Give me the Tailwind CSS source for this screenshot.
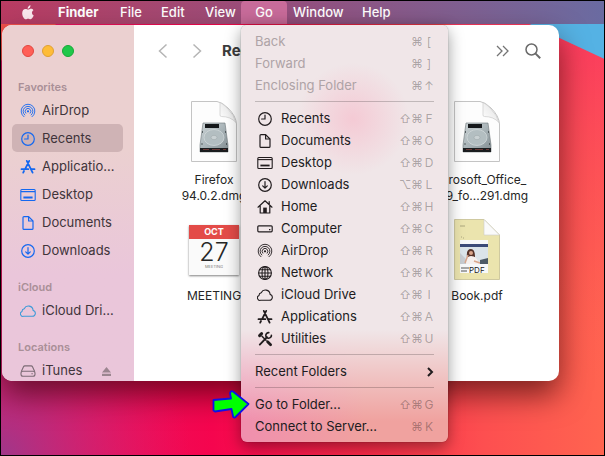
<!DOCTYPE html>
<html lang="en">
<head>
  <meta charset="UTF-8" />
  <meta name="viewport" content="width=device-width, initial-scale=1" />
  <title>Finder</title>
  <script src="https://cdn.jsdelivr.net/npm/@tailwindcss/browser@4"></script>
</head>
<body class="font-['Inter',sans-serif] text-[13px] text-[#2b2327]">

  <!-- Icon set -->
  <svg class="absolute size-0">
    <symbol id="clock" viewBox="0 0 16 16"><g fill="none" stroke="currentColor" stroke-width="1.2" stroke-linecap="round"><circle cx="8" cy="8" r="6.3"/><path d="M8 4v4H4.6"/></g></symbol>
    <symbol id="doc" viewBox="0 0 16 16"><g fill="none" stroke="currentColor" stroke-width="1.2" stroke-linejoin="round"><path d="M3 2.5Q3 1.6 4 1.6h4.6L13 6v7.4q0 1-1 1H4q-1 0-1-1z"/><path d="M8.6 1.8V6H13"/></g></symbol>
    <symbol id="desktop" viewBox="0 0 16 16"><g fill="none" stroke="currentColor" stroke-width="1.1"><rect x=".8" y="2.5" width="14.4" height="11" rx="1"/><path d="M1 4.6h14"/></g><path fill="currentColor" d="M3.4 9.6h9.2v1.8H3.4z"/></symbol>
    <symbol id="download" viewBox="0 0 16 16"><g fill="none" stroke="currentColor" stroke-width="1.2" stroke-linecap="round" stroke-linejoin="round"><circle cx="8" cy="8" r="6.3"/><path d="M8 4.6v6.4M5.7 8.9L8 11.2l2.3-2.3"/></g></symbol>
    <symbol id="home" viewBox="0 0 16 16"><path fill="none" stroke="currentColor" stroke-width="1.2" stroke-linejoin="round" stroke-linecap="round" d="M1 8.2L8 1.8l7 6.400M3.200 7v7h9.600V7M12.200 5V2.600"/><path fill="currentColor" d="M6.200 8.600h3.600V14H6.200z"/></symbol>
    <symbol id="computer" viewBox="0 0 16 16"><rect x=".8" y="4.8" width="14.4" height="6" rx="1" fill="none" stroke="currentColor" stroke-width="1.2"/><path fill="currentColor" d="M12 8h1.4v1.2H12z"/></symbol>
    <symbol id="airdrop" viewBox="0 0 16 16"><g fill="none" stroke="currentColor" stroke-width=".9" stroke-linecap="round"><path d="M4 13.800a6.900 6.900 0 1 1 8 0"/><path d="M4.800 12a4.900 4.900 0 1 1 6.400 0"/><path d="M5.800 10.200a2.900 2.900 0 1 1 4.400 0"/></g><circle cx="8" cy="8.300" r="1.100" fill="currentColor"/></symbol>
    <symbol id="network" viewBox="0 0 16 16"><g fill="none" stroke="currentColor" stroke-width="1.1"><circle cx="8" cy="8" r="6.4"/><ellipse cx="8" cy="8" rx="3" ry="6.4"/><path d="M8 1.6v12.8M1.6 8h12.8M2.6 4.8h10.8M2.6 11.2h10.8"/></g></symbol>
    <symbol id="cloud" viewBox="0 0 16 16"><path fill="none" stroke="currentColor" stroke-width="1.1" stroke-linejoin="round" d="M3.700 13.300h8.600a3 3 0 0 0 .8-5.900A4.700 4.700 0 0 0 4.200 5.700 2.800 2.800 0 0 0 2 8.400a2.600 2.600 0 0 0 1.700 4.900z"/></symbol>
    <symbol id="apps" viewBox="0 0 16 16"><path fill="none" stroke="currentColor" stroke-width="1.8" stroke-linecap="round" d="M6.8 1.9l5.8 11.7M9.2 1.9L5.2 9.8M4 12l-.8 1.6M1.5 10.2h6.8M11.6 10.2h2.9"/></symbol>
    <symbol id="tools" viewBox="0 0 16 16"><g fill="none" stroke="currentColor" stroke-linecap="round"><path stroke-width="1.900" d="M2.800 13.600l7.200-7.400"/><path stroke-width="1.600" d="M14.400 4.200a2.800 2.800 0 1 1-2.600-2.600"/><path stroke-width="2.800" d="M10.600 10.800l3 3"/><path stroke-width="1.500" d="M5 5.200l4 4"/><path stroke-width="3" d="M2.600 4.600l2-2"/></g></symbol>
    <symbol id="drive" viewBox="0 0 16 16"><g fill="none" stroke="currentColor" stroke-width="1.1" stroke-linejoin="round"><path d="M1.2 8.8l2.3-5q.4-.9 1.4-.9h6.2q1 0 1.4.9l2.3 5"/><rect x="1" y="8.2" width="14" height="5" rx="2"/><path d="M11.4 10.7h1.4"/></g></symbol>

    <linearGradient id="metal" x1="0" y1="0" x2="1" y2="1"><stop offset="0" stop-color="#ccd4d6"/><stop offset=".5" stop-color="#a9b4b8"/><stop offset="1" stop-color="#828d91"/></linearGradient>
    <linearGradient id="fold" x1="0" y1="1" x2="1" y2="0"><stop offset="0" stop-color="#fff"/><stop offset=".6" stop-color="#ececec"/><stop offset="1" stop-color="#cfcfcf"/></linearGradient>
    <symbol id="dmg" viewBox="0 0 46 61">
      <path d="M.5.5H26Q31 1 37 7q8 8 8.500 16v37.500H.5z" fill="#fdfdfd" stroke="#c4c4c4"/>
      <path d="M29 1.500V14q0 1.500 1.500 1.500 9 0 14.500 6Q43 14 37 8 33 3.500 29 1.500z" fill="url(#fold)" stroke="#cacaca" stroke-width=".7"/>
      <path d="M12 22h22l3 22v7H9v-7z" fill="url(#metal)" stroke="#6d7679" stroke-width=".6"/>
      <path d="M9 47h28v4H9z" fill="#1b1d1f"/>
      <path d="M12 48.500h6M21 48.500h8M32 48.500h3" stroke="#6b3a37" stroke-width="1"/>
      <path d="M14 23h14v4H14z" fill="#15181b"/>
      <ellipse cx="23" cy="36.500" rx="10" ry="8" fill="#b3bec1" stroke="#d4dbdd" stroke-width=".7"/>
      <ellipse cx="23" cy="36.500" rx="3" ry="2.200" fill="#c9d1d3" stroke="#98a2a5" stroke-width=".5"/>
      <path d="M11 31h1M34 31h1M10.500 43h1M35 43h1" stroke="#3b4346" stroke-width="1.500"/>
    </symbol>
  </svg>

  <div class="relative h-screen overflow-hidden border border-black">

    <!-- Wallpaper -->
    <svg class="absolute inset-0 size-full" viewBox="0 0 605 456" preserveAspectRatio="none">
      <defs>
        <linearGradient id="base"><stop offset="0" stop-color="#e01a68"/><stop offset=".35" stop-color="#f5054e"/><stop offset=".6" stop-color="#fa2a48"/><stop offset=".8" stop-color="#fd4f50"/><stop offset="1" stop-color="#ff6450"/></linearGradient>
        <radialGradient id="violet" gradientUnits="userSpaceOnUse" cx="0" cy="456" r="190"><stop offset="0" stop-color="#a0378a"/><stop offset="1" stop-color="#e0206e" stop-opacity="0"/></radialGradient>
        <linearGradient id="rose" x2="0" y2="1"><stop offset="0" stop-color="#fa3560"/><stop offset=".6" stop-color="#fc4a58" stop-opacity=".4"/><stop offset="1" stop-color="#ff6450" stop-opacity="0"/></linearGradient>
      </defs>
      <rect width="605" height="456" fill="url(#base)"/>
      <rect x="450" width="155" height="400" fill="url(#rose)"/>
      <rect width="300" height="456" fill="url(#violet)"/>
      <path d="M0 20h60L0 60z" fill="#f2514c"/>
      <path d="M528 22h77v36z" fill="#55b2e4"/>
    </svg>

    <!-- Menu bar -->
    <nav class="relative flex h-[23px] items-center bg-linear-to-r from-[#b93b62] via-[#93507f] to-[#6a6ba1] pl-5 font-medium text-white">
      <svg class="mr-[23px] h-[15px] w-[14px] fill-[#fbe9ef]" viewBox="0 0 14 16"><path d="M9.700.300c.1 1-.3 1.900-.9 2.600-.6.700-1.400 1.100-2.200 1.100-.1-1 .3-1.800.9-2.500C8.100.8 9 .3 9.700.3zM12.800 5.500c-1.100.7-1.600 1.600-1.600 2.700 0 1.300.7 2.300 1.900 2.800-.5 1.500-1.800 4.200-3.400 4.200-1 0-1.300-.6-2.500-.6s-1.600.6-2.500.6C2.800 15.200.8 11.700.8 8.700c0-2.900 1.700-4.500 3.500-4.500 1.200 0 2 .7 2.800.7.800 0 1.800-.8 3.200-.8 1 0 1.900.5 2.500 1.400z"/></svg>
      <button class="w-[62px] text-left font-bold">Finder</button>
      <button class="w-[41px] text-left">File</button>
      <button class="w-11 text-left">Edit</button>
      <button class="w-9 text-left">View</button>
      <button class="h-full w-[46px] rounded-t-sm bg-[#c96c9b]">Go</button>
      <button class="w-[75px] pl-1.5 text-left">Window</button>
      <button class="text-left">Help</button>
    </nav>

    <!-- Finder window -->
    <main class="absolute top-6 left-px flex h-[356px] w-[557px] overflow-hidden rounded-[10px] bg-white shadow-[0_14px_30px_rgba(40,0,0,0.6)]">
      <aside class="w-[132px] shrink-0 bg-linear-to-b from-[#ebd0d0] from-35% to-[#eac6da] to-70% pl-2.5 text-[#40343a]">
        <div class="flex h-[39px] gap-2 pt-5 pl-2.5">
          <button aria-label="Close" class="size-3 rounded-full border border-[#e2463f] bg-[#ff5f57]"></button>
          <button aria-label="Minimize" class="size-3 rounded-full border border-[#e0a033] bg-[#febc38]"></button>
          <button aria-label="Zoom" class="size-3 rounded-full border border-[#17a837] bg-[#1fc84a]"></button>
        </div>
        <div id="sidebar"></div>
      </aside>

      <section class="min-w-0 grow">
        <div class="flex h-[52px] items-center pr-[18px] pl-6 text-[#6f6f6f]">
          <button aria-label="Back" class="mr-6"><svg class="h-4 w-2.5 fill-none stroke-[#b5b5b5] stroke-[1.5]" viewBox="0 0 10 16"><path d="M8.500 1.500L1.500 8l7 6.500"/></svg></button>
          <button aria-label="Forward" class="mr-5"><svg class="h-4 w-2.5 fill-none stroke-[#b5b5b5] stroke-[1.5]" viewBox="0 0 10 16"><path d="M1.500 1.500l7 6.500-7 6.500"/></svg></button>
          <h1 class="grow text-[15px] font-bold text-[#3c3c3c]">Recents</h1>
          <button aria-label="More" class="mr-4"><svg class="h-3 w-[13px] fill-none stroke-[#747474] stroke-[1.3]" viewBox="0 0 13 12"><path d="M1 1l5 5-5 5M7 1l5 5-5 5"/></svg></button>
          <button aria-label="Search"><svg class="size-4 fill-none stroke-[#6a6a6a] stroke-[1.5]" viewBox="0 0 16 16"><circle cx="6.500" cy="6.500" r="5.500"/><path stroke-width="2" d="M10.600 10.600l4.600 4.600"/></svg></button>
        </div>

        <div class="grid grid-cols-[112px_112px] justify-between gap-y-[15px] pr-[26px] pl-6 pt-6 text-center text-[12px] leading-4 text-[#262626]">
          <figure>
            <svg class="mx-auto h-[61px] w-[46px]"><use href="#dmg"/></svg>
            <figcaption class="mt-2.5">Firefox<br>94.0.2.dmg</figcaption>
          </figure>
          <figure>
            <svg class="mx-auto h-[61px] w-[46px]"><use href="#dmg"/></svg>
            <figcaption class="mt-2.5">Microsoft_Office_<br>2019_fo...291.dmg</figcaption>
          </figure>
          <figure>
            <div class="flex h-[61px] items-center justify-center">
              <div class="h-[50px] w-[50px] bg-[#fafafa] shadow-[0_1px_2px_rgba(0,0,0,0.5)]">
                <p class="h-3.5 bg-[#e34b48] text-[9px] leading-3.5 font-bold text-white">OCT</p>
                <p class="text-[25px] leading-[26px] font-light">27</p>
                <p class="text-[4px] leading-1 text-[#777]">MEETING</p>
              </div>
            </div>
            <figcaption class="mt-2">MEETING</figcaption>
          </figure>
          <figure>
            <svg class="mx-auto h-[61px] w-[46px]" viewBox="0 0 46 61">
              <path d="M.5.5H30L45.500 16v44.500H.5z" fill="#ebe4ae" stroke="#cfc9a0"/>
              <path d="M30 .5V16h15.500z" fill="#fafafa" stroke="#cfcfcf" stroke-width=".6"/>
              <path d="M6 7h5M7 18h1M9 19h1" stroke="#9c9872" stroke-width=".8"/>
              <path d="M6 21h28v33H6z" fill="#f7f8fa"/>
              <path d="M6 25h28v3H6z" fill="#3b4a78"/>
              <path d="M6 28h28v17H6z" fill="#dbe4ea"/>
              <path d="M6 45V34l5 5 3 6z" fill="#c7ccd2"/>
              <path d="M13 38q-1-8 4-8 4 0 4 8z" fill="#55332a"/>
              <path d="M12 45q0-8 5-8 6 0 8 8z" fill="#f6f0ee"/>
              <circle cx="17" cy="34" r="2" fill="#d9a58b"/>
              <path d="M11 44l3-8M20 42l6 2" stroke="#d9a58b" stroke-width="1.500"/>
              <path d="M26 41l8-2v6h-8z" fill="#4c5a66"/>
              <path d="M7 49h8M7 52h6" stroke="#555" stroke-width="1"/>
              <text x="15" y="54" class="text-[8px]" fill="#222">PDF</text>
            </svg>
            <figcaption class="mt-2">Book.pdf</figcaption>
          </figure>
        </div>
      </section>
    </main>

    <!-- Go menu -->
    <div id="go-menu" class="absolute top-6 left-60 w-[207px] rounded-md bg-[radial-gradient(circle_at_112px_94px,rgba(246,190,204,0.7),rgba(246,190,204,0)_56px),linear-gradient(to_bottom,#f0e6e8_73%,rgba(240,230,232,0)_95%),linear-gradient(to_right,#f08fae,#f0a29f_60%)] py-[5px] shadow-[0_5px_16px_rgba(0,0,0,0.4),0_0_1px_rgba(0,0,0,0.6)]"></div>

    <!-- Pointer arrow -->
    <svg class="absolute top-[388px] left-[210px] h-[30px] w-10" viewBox="0 0 40 30"><path d="M2.500 11l17.500-1.500L19 4q1-2.500 3-1.500L37.500 15 24 28.500q-2 .5-2-1.500l-1.500-7L4 22.500l-1.500-1z" fill="#0f0" stroke="#1010e8" stroke-width="1.800" stroke-linejoin="round"/></svg>
  </div>

  <script>
    const sections = [
      { title: 'Favorites', items: [['airdrop', 'AirDrop'], ['clock', 'Recents'], ['apps', 'Applicatio...'], ['desktop', 'Desktop'], ['doc', 'Documents'], ['download', 'Downloads']] },
      { title: 'iCloud', items: [['cloud', 'iCloud Dri...']] },
      { title: 'Locations', items: [['drive', 'iTunes']] }
    ];

    // [icon, label, shortcut keys, state]; null is a separator
    const menu = [
      ['', 'Back', ['', '⌘', '['], 'off'],
      ['', 'Forward', ['', '⌘', ']'], 'off'],
      ['', 'Enclosing Folder', ['', '⌘', '↑'], 'off'],
      null,
      ['clock', 'Recents', ['⇧', '⌘', 'F']],
      ['doc', 'Documents', ['⇧', '⌘', 'O']],
      ['desktop', 'Desktop', ['⇧', '⌘', 'D']],
      ['download', 'Downloads', ['⌥', '⌘', 'L']],
      ['home', 'Home', ['⇧', '⌘', 'H']],
      ['computer', 'Computer', ['⇧', '⌘', 'C']],
      ['airdrop', 'AirDrop', ['⇧', '⌘', 'R']],
      ['network', 'Network', ['⇧', '⌘', 'K']],
      ['cloud', 'iCloud Drive', ['⇧', '⌘', 'I']],
      ['apps', 'Applications', ['⇧', '⌘', 'A']],
      ['tools', 'Utilities', ['⇧', '⌘', 'U']],
      null,
      ['', 'Recent Folders', null],
      null,
      ['', 'Go to Folder...', ['⇧', '⌘', 'G']],
      ['', 'Connect to Server...', ['', '⌘', 'K']]
    ];

    const iconColor = { cloud: 'text-[#3d9ad8]', drive: 'text-[#7c6b75]' };

    document.getElementById('sidebar').innerHTML = sections.map(s => `
      <h2 class="h-8 pt-3.5 pl-1.5 text-[11px] leading-[18px] font-semibold text-[#a98f97]">${s.title}</h2>
      ${s.items.map(([icon, label]) => `
        <a href="#" class="flex h-7 w-[111px] items-center gap-1.5 rounded-[5px] pt-0.5 pl-2 ${label === 'Recents' ? 'bg-[#cfb3b5]' : ''}">
          <svg class="size-4 shrink-0 ${iconColor[icon] || 'text-[#1468f0]'}"><use href="#${icon}"/></svg>
          <span class="grow">${label}</span>
          ${icon === 'drive' ? '<svg class="mr-3 size-[9px] fill-[#9b8590]" viewBox="0 0 9 9"><path d="M4.500 0L9 5.500H0zM0 6.700h9V9H0z"/></svg>' : ''}
        </a>`).join('')}
    `).join('');

    document.getElementById('go-menu').innerHTML = menu.map(row => {
      if (!row) return '<hr class="mx-3.5 my-[5px] border-black/20">';
      const [icon, label, keys, state] = row;
      return `
        <button class="flex h-[22px] w-full items-center pt-0.5 pr-[13px] pl-3.5 text-left ${state === 'off' ? 'text-[#aea3a6]' : 'text-[#211c1e]'}" ${state === 'off' ? 'disabled' : ''}>
          ${icon ? `<svg class="mr-2 ml-0.5 size-4"><use href="#${icon}"/></svg>` : ''}
          <span class="grow">${label}</span>
          ${keys ? `<kbd class="grid grid-cols-[12px_12px_12px] text-center font-['Inter',sans-serif] text-[12px] text-black/30">${keys.map(k => `<span>${k}</span>`).join('')}</kbd>`
                 : '<svg class="h-2.5 w-[9px] fill-none stroke-current stroke-2" viewBox="0 0 9 10"><path d="M2 1l4 4-4 4"/></svg>'}
        </button>`;
    }).join('');
  </script>
</body>
</html>
